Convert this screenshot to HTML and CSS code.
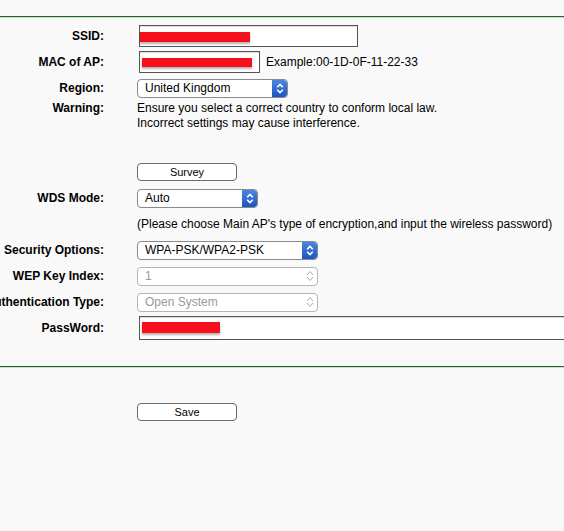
FILE: index.html
```html
<!DOCTYPE html>
<html>
<head>
<meta charset="utf-8">
<link rel="stylesheet" href="styles.css">
</head>
<body>
<div class="page">
  <div class="rule"></div>
  <div class="form">
    <div class="row">
      <div class="label">SSID:</div>
      <div class="value"><div class="field field-ssid"><span class="redact redact-ssid"></span></div></div>
    </div>
    <div class="row">
      <div class="label">MAC of AP:</div>
      <div class="value"><div class="field field-mac"><span class="redact redact-mac"></span></div><span class="example">Example:00-1D-0F-11-22-33</span></div>
    </div>
    <div class="row">
      <div class="label">Region:</div>
      <div class="value"><div class="select w150"><span class="sel-text">United Kingdom</span><span class="arrow"><svg width="8" height="11" viewBox="0 0 8 11"><path d="M1.2 4.2 L4 1.4 L6.8 4.2 M1.2 6.8 L4 9.6 L6.8 6.8" fill="none" stroke="#fff" stroke-width="1.6"/></svg></span></div></div>
    </div>
    <div class="row row-text">
      <div class="label label-top">Warning:</div>
      <div class="value text">Ensure you select a correct country to conform local law.<br>Incorrect settings may cause interference.</div>
    </div>
    <div class="spacer-a"></div>
    <div class="row">
      <div class="label"></div>
      <div class="value"><div class="button">Survey</div></div>
    </div>
    <div class="row">
      <div class="label">WDS Mode:</div>
      <div class="value"><div class="select w120"><span class="sel-text">Auto</span><span class="arrow"><svg width="8" height="11" viewBox="0 0 8 11"><path d="M1.2 4.2 L4 1.4 L6.8 4.2 M1.2 6.8 L4 9.6 L6.8 6.8" fill="none" stroke="#fff" stroke-width="1.6"/></svg></span></div></div>
    </div>
    <div class="row">
      <div class="label"></div>
      <div class="value text">(Please choose Main AP's type of encryption,and input the wireless password)</div>
    </div>
    <div class="row">
      <div class="label">Security Options:</div>
      <div class="value"><div class="select w180"><span class="sel-text">WPA-PSK/WPA2-PSK</span><span class="arrow"><svg width="8" height="11" viewBox="0 0 8 11"><path d="M1.2 4.2 L4 1.4 L6.8 4.2 M1.2 6.8 L4 9.6 L6.8 6.8" fill="none" stroke="#fff" stroke-width="1.6"/></svg></span></div></div>
    </div>
    <div class="row">
      <div class="label">WEP Key Index:</div>
      <div class="value"><div class="select w180 disabled"><span class="sel-text">1</span><span class="arrow"><svg width="8" height="12" viewBox="0 0 8 12"><path d="M1 5 L4 1.5 L7 5 M1 7 L4 10.5 L7 7" fill="none" stroke="#aaa" stroke-width="1"/></svg></span></div></div>
    </div>
    <div class="row">
      <div class="label">Authentication Type:</div>
      <div class="value"><div class="select w180 disabled"><span class="sel-text">Open System</span><span class="arrow"><svg width="8" height="12" viewBox="0 0 8 12"><path d="M1 5 L4 1.5 L7 5 M1 7 L4 10.5 L7 7" fill="none" stroke="#aaa" stroke-width="1"/></svg></span></div></div>
    </div>
    <div class="row">
      <div class="label">PassWord:</div>
      <div class="value"><div class="field field-pass"><span class="redact redact-pass"></span></div></div>
    </div>
  </div>
  <div class="rule rule-bottom"></div>
  <div class="actions"><div class="button">Save</div></div>
</div>
</body>
</html>
```
FILE: styles.css
```css
html, body {
  margin: 0;
  padding: 0;
  overflow: hidden;
  background: #f9f9f9;
}
.page {
  width: 564px;
  height: 531px;
  padding-top: 16px;
  box-sizing: border-box;
  font-family: "Liberation Sans", Arial, Helvetica, sans-serif;
  font-size: 12px;
  color: #000;
  overflow: hidden;
}
.rule {
  height: 1px;
  background: #2f5e3b;
  border-bottom: 1px solid #c3e4c3;
}
.form {
  padding-top: 5px;
}
.row {
  display: grid;
  grid-template-columns: 104px 1fr;
  column-gap: 33px;
  align-items: center;
  height: 26px;
}
.row-text {
  height: 30px;
}
.label {
  display: flex;
  justify-content: flex-end;
  white-space: nowrap;
  font-weight: bold;
}
.label-top {
  align-self: start;
  line-height: 15px;
}
.value {
  display: flex;
  align-items: center;
  white-space: nowrap;
  min-width: 0;
}
.text {
  display: block;
  line-height: 15px;
}
.spacer-a { height: 28px; }
.field {
  box-sizing: border-box;
  margin-left: 2px;
  height: 22px;
  background: #fff;
  border: 1px solid #555;
  box-shadow: inset 0 1px 1px rgba(0,0,0,0.15);
  display: flex;
  align-items: flex-start;
}
.field-ssid { width: 219px; }
.field-mac { width: 121px; }
.field-pass { width: 460px; height: 24px; flex: none; }
.redact {
  display: block;
  background: #f5101c;
  box-shadow: 0 2px 2px rgba(0,0,0,0.3);
}
.redact-ssid { width: 110px; height: 10px; margin-top: 6px; margin-left: 0; }
.redact-mac { width: 110px; height: 9px; margin-top: 6px; margin-left: 2px; }
.redact-pass { width: 78px; height: 11px; margin-top: 5px; margin-left: 2px; }
.example { margin-left: 6px; }
.select {
  box-sizing: border-box;
  height: 19px;
  border: 1px solid #8a8a8a;
  border-radius: 4px;
  background: #fff;
  display: flex;
  align-items: center;
  justify-content: space-between;
  font-size: 12px;
  overflow: hidden;
}
.w150 { width: 151px; }
.w120 { width: 121px; }
.w180 { width: 181px; }
.sel-text { padding-left: 7px; }
.arrow {
  width: 15px;
  height: 17px;
  display: flex;
  align-items: center;
  justify-content: center;
  background: linear-gradient(#4a87e0, #1d54c2);
  border-radius: 0 3px 3px 0;
}
.disabled {
  border-color: #b5b5b5;
  color: #9a9a9a;
}
.disabled .arrow {
  background: none;
}
.button {
  box-sizing: border-box;
  width: 100px;
  height: 18px;
  border: 1px solid #6a6a6a;
  border-radius: 4px;
  background: #fff;
  font-size: 11px;
  display: flex;
  align-items: center;
  justify-content: center;
}
.rule-bottom {
  margin-top: 25px;
}
.actions {
  padding-top: 35px;
  padding-left: 137px;
}
```
